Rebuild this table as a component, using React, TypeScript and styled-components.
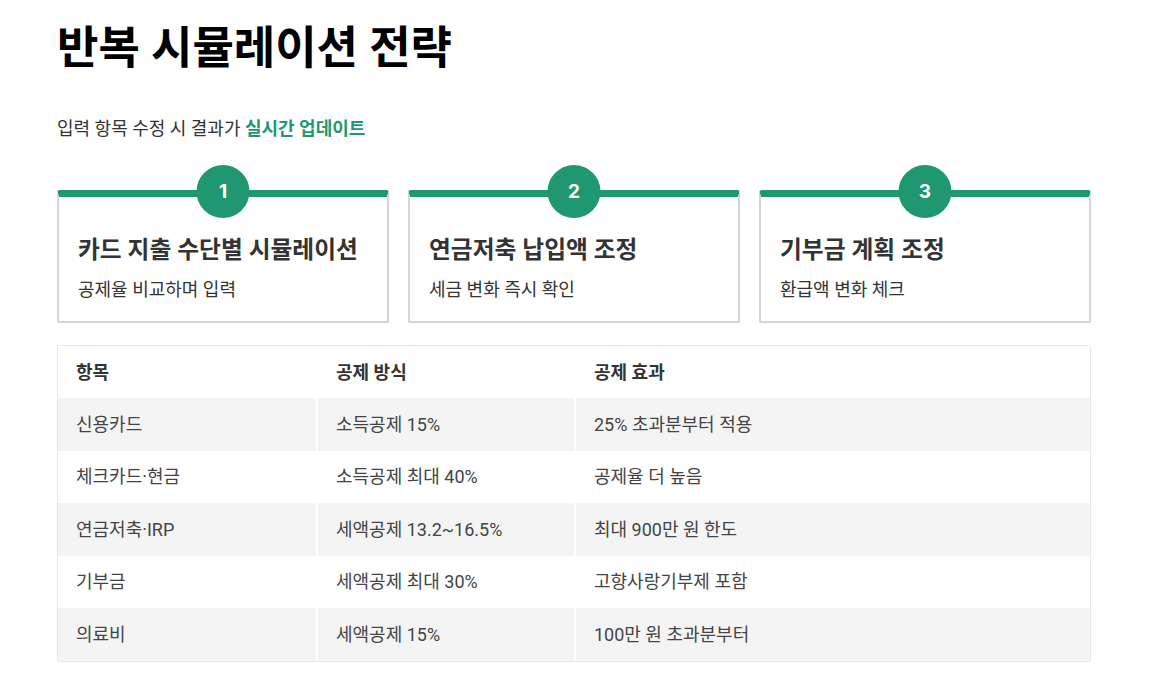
import React from 'react';
import styled, { createGlobalStyle } from 'styled-components';

const GREEN = '#1f9770';

const GlobalStyle = createGlobalStyle`
  html, body {
    margin: 0;
    padding: 0;
    background: #ffffff;
  }
  body {
    font-family: Roboto, "Noto Sans CJK KR", "Noto Sans", sans-serif;
    color: #333333;
  }
`;

const Page = styled.main`
  width: 1034px;
  padding: 18px 57px 20px;
`;

const Title = styled.h1`
  margin: 0;
  font-size: 45px;
  font-weight: 700;
  line-height: 62px;
  color: #000000;
`;

const Lead = styled.p`
  margin: 37px 0 0;
  font-size: 18px;
  line-height: 24px;
  color: #333333;
`;

const Accent = styled.strong`
  color: ${GREEN};
  font-weight: 700;
`;

const Steps = styled.div`
  display: grid;
  grid-template-columns: repeat(3, 1fr);
  gap: 19px;
  margin-top: 49px;
`;

const StepCard = styled.div`
  position: relative;
  height: 133px;
  border: 2px solid #d6d3d3;
  border-top: 7px solid ${GREEN};
  border-radius: 3px 3px 2px 2px;
  padding: 38px 19px 0;
  box-sizing: border-box;
`;

const StepBadge = styled.span`
  position: absolute;
  top: -32px;
  left: 50%;
  transform: translateX(-50%);
  width: 53px;
  height: 53px;
  border-radius: 50%;
  background: ${GREEN};
  color: #ffffff;
  font-family: Inter, "Liberation Sans", sans-serif;
  font-size: 19px;
  font-weight: 700;
  display: flex;
  align-items: center;
  justify-content: center;
`;

const StepTitle = styled.h3`
  margin: 0;
  font-size: 23.75px;
  font-weight: 700;
  line-height: 30px;
  color: #333333;
`;

const StepText = styled.p`
  margin: 13px 0 0;
  font-size: 18px;
  line-height: 24px;
  color: #333333;
`;

const Table = styled.table`
  width: 100%;
  margin-top: 22px;
  border-collapse: separate;
  border-spacing: 0;
  border: 1px solid #e8e8e8;
  border-radius: 2px;
  font-size: 18px;
  color: #444444;
`;

const HeadCell = styled.th`
  text-align: left;
  font-weight: 700;
  color: #333333;
  height: 49px;
  padding: 0 18px 3px;
  background: #ffffff;
  & + & {
    border-left: 2px solid #ffffff;
  }
`;

const Row = styled.tr<{ $shade: boolean }>`
  background: ${(p) => (p.$shade ? '#f4f4f4' : '#ffffff')};
`;

const Cell = styled.td`
  height: 49.5px;
  padding: 0 18px 3px;
  & + & {
    border-left: 2px solid #ffffff;
  }
`;

const steps = [
  { n: 1, title: '카드 지출 수단별 시뮬레이션', text: '공제율 비교하며 입력' },
  { n: 2, title: '연금저축 납입액 조정', text: '세금 변화 즉시 확인' },
  { n: 3, title: '기부금 계획 조정', text: '환급액 변화 체크' },
];

const rows = [
  ['신용카드', '소득공제 15%', '25% 초과분부터 적용'],
  ['체크카드·현금', '소득공제 최대 40%', '공제율 더 높음'],
  ['연금저축·IRP', '세액공제 13.2~16.5%', '최대 900만 원 한도'],
  ['기부금', '세액공제 최대 30%', '고향사랑기부제 포함'],
  ['의료비', '세액공제 15%', '100만 원 초과분부터'],
];

export default function App() {
  return (
    <>
      <GlobalStyle />
      <Page>
        <Title>반복 시뮬레이션 전략</Title>
        <Lead>
          입력 항목 수정 시 결과가 <Accent>실시간 업데이트</Accent>
        </Lead>
        <Steps>
          {steps.map((s) => (
            <StepCard key={s.n}>
              <StepBadge>{s.n}</StepBadge>
              <StepTitle>{s.title}</StepTitle>
              <StepText>{s.text}</StepText>
            </StepCard>
          ))}
        </Steps>
        <Table>
          <colgroup>
            <col style={{ width: '25%' }} />
            <col style={{ width: '25%' }} />
            <col style={{ width: '50%' }} />
          </colgroup>
          <thead>
            <tr>
              <HeadCell>항목</HeadCell>
              <HeadCell>공제 방식</HeadCell>
              <HeadCell>공제 효과</HeadCell>
            </tr>
          </thead>
          <tbody>
            {rows.map((r, i) => (
              <Row key={r[0]} $shade={i % 2 === 0}>
                {r.map((c) => (
                  <Cell key={c}>{c}</Cell>
                ))}
              </Row>
            ))}
          </tbody>
        </Table>
      </Page>
    </>
  );
}
